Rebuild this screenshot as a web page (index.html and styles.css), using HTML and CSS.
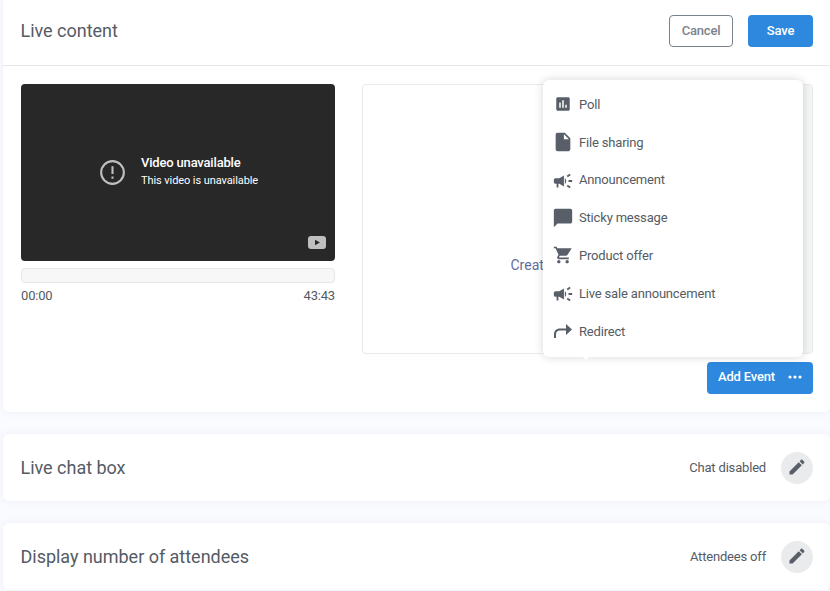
FILE: index.html
```html
<!DOCTYPE html>
<html lang="en">
    <head>
        <title>Live content</title>
        <meta charset="utf-8" />
        <meta name="viewport" content="width=device-width, initial-scale=1">
        <link rel="stylesheet" href="styles.css">
    </head>
    <body>
        <!-- Shared icon shapes -->
        <svg class="defs">
            <symbol id="megaphone" viewBox="0 0 24 24">
                <path d="M18 11v2h4v-2h-4zm-2 6.610c.96.71 2.210 1.650 3.200 2.390.4-.53.8-1.070 1.200-1.600-.99-.74-2.240-1.680-3.200-2.400-.4.54-.8 1.080-1.200 1.610zM20.400 5.600c-.4-.53-.8-1.070-1.200-1.600-.99.74-2.240 1.680-3.200 2.400.4.53.8 1.070 1.200 1.600.96-.72 2.210-1.650 3.200-2.400zM4 9c-1.100 0-2 .9-2 2v2c0 1.100.9 2 2 2h1v4h2v-4h1l5 3V6L8 9H4zm11.500 3c0-1.330-.58-2.530-1.500-3.350v6.690c.92-.81 1.500-2.010 1.500-3.340z"/>
            </symbol>
            <symbol id="pencil" viewBox="0 0 24 24">
                <path d="M3 17.250V21h3.750L17.810 9.940l-3.750-3.750L3 17.250zM20.710 7.040c.39-.39.39-1.020 0-1.410l-2.340-2.340c-.39-.39-1.020-.39-1.410 0l-1.830 1.830 3.750 3.750 1.830-1.830z"/>
            </symbol>
        </svg>

        <section class="card live">
            <header class="card-header">
                <h2>Live content</h2>
                <div class="actions">
                    <button class="btn btn-outline" type="button">Cancel</button>
                    <button class="btn btn-primary" type="button">Save</button>
                </div>
            </header>
            <div class="live-body">
                <div class="player">
                    <div class="video">
                        <svg class="alert" viewBox="0 0 24 24">
                            <circle cx="12" cy="12" r="10.900"/>
                            <path d="M12 6v7.500M12 15.800v2.200"/>
                        </svg>
                        <div class="video-message">
                            <div class="video-title">Video unavailable</div>
                            <div class="video-text">This video is unavailable</div>
                        </div>
                        <svg class="youtube" viewBox="0 0 18 13">
                            <rect width="18" height="13" rx="3"/>
                            <path d="M7 3.700v5.600l5-2.800z"/>
                        </svg>
                    </div>
                    <div class="progress"></div>
                    <div class="times"><span>00:00</span><span>43:43</span></div>
                </div>
                <div class="events">
                    <div class="events-list">Create</div>
                    <button class="btn btn-primary add-event" type="button">
                        Add Event
                        <svg viewBox="0 0 14 4"><circle cx="2" cy="2" r="1.600"/><circle cx="7" cy="2" r="1.600"/><circle cx="12" cy="2" r="1.600"/></svg>
                    </button>
                    <ul class="menu">
                        <li>
                            <svg viewBox="0 0 24 24"><path fill-rule="evenodd" d="M5 3h14c1.100 0 2 .9 2 2v14c0 1.100-.9 2-2 2H5c-1.100 0-2-.9-2-2V5c0-1.100.9-2 2-2zm2 7v7h2v-7H7zm4-3v10h2V7h-2zm4 6v4h2v-4h-2z"/></svg>
                            Poll
                        </li>
                        <li>
                            <svg class="wide" viewBox="0 0 24 24"><path d="M6 2c-1.100 0-2 .9-2 2v16c0 1.100.9 2 2 2h12c1.100 0 2-.9 2-2V8l-6-6H6zm7 7V3.500L18.500 9H13z"/></svg>
                            File sharing
                        </li>
                        <li>
                            <svg class="wide low"><use href="#megaphone"/></svg>
                            Announcement
                        </li>
                        <li>
                            <svg class="wide" viewBox="0 0 24 24"><path d="M20 2H4c-1.100 0-2 .9-2 2v18l4-4h14c1.100 0 2-.9 2-2V4c0-1.100-.9-2-2-2z"/></svg>
                            Sticky message
                        </li>
                        <li>
                            <svg class="cart" viewBox="0 0 24 24"><path d="M7 18c-1.100 0-1.990.9-1.990 2S5.900 22 7 22s2-.9 2-2-.9-2-2-2zM1 2v2h2l3.600 7.590-1.350 2.450c-.16.28-.25.61-.25.96 0 1.100.9 2 2 2h12v-2H7.420c-.14 0-.25-.11-.25-.25l.03-.12.9-1.630h7.450c.75 0 1.410-.41 1.750-1.030L22.500 4H5.210l-.94-2H1zm16 16c-1.100 0-1.990.9-1.990 2s.89 2 1.990 2 2-.9 2-2-.9-2-2-2z"/></svg>
                            Product offer
                        </li>
                        <li>
                            <svg class="wide low"><use href="#megaphone"/></svg>
                            Live sale announcement
                        </li>
                        <li>
                            <svg class="redirect" viewBox="0 0 18 14"><path d="M12 0l6 5.500-6 5.500V6.600H6C3.500 6.600 2 8 2 10.500V14H0v-3.500C0 6.800 2.300 4.500 6 4.500h6z"/></svg>
                            Redirect
                        </li>
                    </ul>
                </div>
            </div>
        </section>

        <section class="card row">
            <h2>Live chat box</h2>
            <span class="status">Chat disabled</span>
            <button class="edit" type="button"><svg><use href="#pencil"/></svg></button>
        </section>

        <section class="card row">
            <h2>Display number of attendees</h2>
            <span class="status">Attendees off</span>
            <button class="edit" type="button"><svg><use href="#pencil"/></svg></button>
        </section>
    </body>
</html>
```
FILE: styles.css
```css
* { box-sizing: border-box; }
body {
    margin: 0;
    padding-left: 3px;
    height: 591px;
    overflow: hidden;
    background-color: #fafbff;
    color: #555b64;
    font-family: Roboto, sans-serif;
    font-size: 13px;
    letter-spacing: -0.18px;
}
.defs { display: none; }
svg { display: block; flex: none; fill: #595f69; }
h2 { margin: 0; font-size: 18px; font-weight: 400; line-height: 24px; letter-spacing: -0.02px; }
.card {
    background-color: white;
    border-radius: 6px;
    margin-bottom: 22px;
    box-shadow: 0 0 8px rgba(60, 70, 110, 0.07);
}
.live { height: 412px; border-top-left-radius: 0; border-top-right-radius: 0; }
.card-header {
    display: flex;
    align-items: center;
    justify-content: space-between;
    height: 66px;
    padding: 0 17px 4px 17.500px;
    border-bottom: 1px solid #e6e8ea;
}
.actions { display: flex; gap: 15px; }
.btn {
    height: 32px;
    padding: 0;
    border: 0;
    border-radius: 4px;
    font-family: inherit;
    font-size: 13px;
    font-weight: 500;
    letter-spacing: -0.18px;
}
.btn-outline {
    width: 64px;
    border: 1px solid #7a838c;
    background-color: white;
    color: #7a838c;
}
.btn-primary { width: 65px; background-color: #2e88dd; color: white; }

.live-body { display: flex; gap: 27px; padding: 18px 17px 0 18px; }
.player { width: 314px; }
.video {
    position: relative;
    display: flex;
    align-items: center;
    gap: 16px;
    height: 177px;
    padding-left: 79px;
    border-radius: 4px;
    background-color: #282828;
    color: white;
}
.alert { width: 25px; height: 25px; fill: none; stroke: #bfbfbf; stroke-width: 2; }
.video-message { padding-bottom: 2px; }
.video-title { font-weight: 500; line-height: 18px; }
.video-text { font-size: 11px; line-height: 18px; letter-spacing: -0.08px; }
.youtube { position: absolute; right: 9px; bottom: 12px; width: 18px; height: 13px; fill: #bfbfbf; }
.youtube path { fill: #282828; }
.progress {
    height: 15px;
    margin-top: 7px;
    border: 1px solid #e7e7e7;
    border-radius: 4px;
    background-color: #f7f7f7;
}
.times { display: flex; justify-content: space-between; line-height: 16px; margin-top: 5px; }

.events { position: relative; flex: 1; }
.events-list {
    height: 270px;
    padding: 170px 0 0 147.500px;
    border: 1px solid #e7e9ea;
    border-radius: 4px;
    box-shadow: inset -9px 0 #f4f6f6;
    color: #5f6e9c;
    font-size: 14px;
    line-height: 20px;
    letter-spacing: 0;
}
.add-event {
    display: flex;
    align-items: center;
    justify-content: space-between;
    width: 106px;
    margin: 8px 0 0 auto;
    padding: 0 11px 3px;
}
.add-event svg { width: 14px; height: 4px; fill: white; }

/* Dropdown opens upwards from the Add Event button */
.menu {
    position: absolute;
    top: -4px;
    right: 10px;
    width: 260px;
    height: 277px;
    margin: 0;
    padding: 5.400px 11px;
    list-style: none;
    border-radius: 6px;
    background-color: white;
    box-shadow: 0 0 10px rgba(0, 0, 0, 0.16);
}
.menu::after {
    content: "";
    position: absolute;
    left: 39px;
    bottom: -3px;
    border: 4px solid transparent;
    border-top-color: white;
    border-bottom: 0;
}
.menu li { display: flex; align-items: center; height: 37.800px; gap: 7px; }
.menu svg { width: 18px; height: 18px; }
.menu .wide { width: 22px; height: 22px; margin: 0 -2px; }
.menu .cart { width: 20px; height: 20px; margin: 0 -1px; }
.menu .low { position: relative; top: 1px; }
.menu .redirect { height: 14px; }

.row { display: flex; align-items: center; height: 67px; padding: 0 17px 0 17.500px; }
.row h2 { flex: 1; }
.edit {
    display: flex;
    align-items: center;
    justify-content: center;
    width: 32px;
    height: 32px;
    margin-left: 15px;
    padding: 0 1px 2px 0;
    border: 0;
    border-radius: 50%;
    background-color: #e9ebec;
}
.edit svg { width: 20px; height: 20px; }
```
